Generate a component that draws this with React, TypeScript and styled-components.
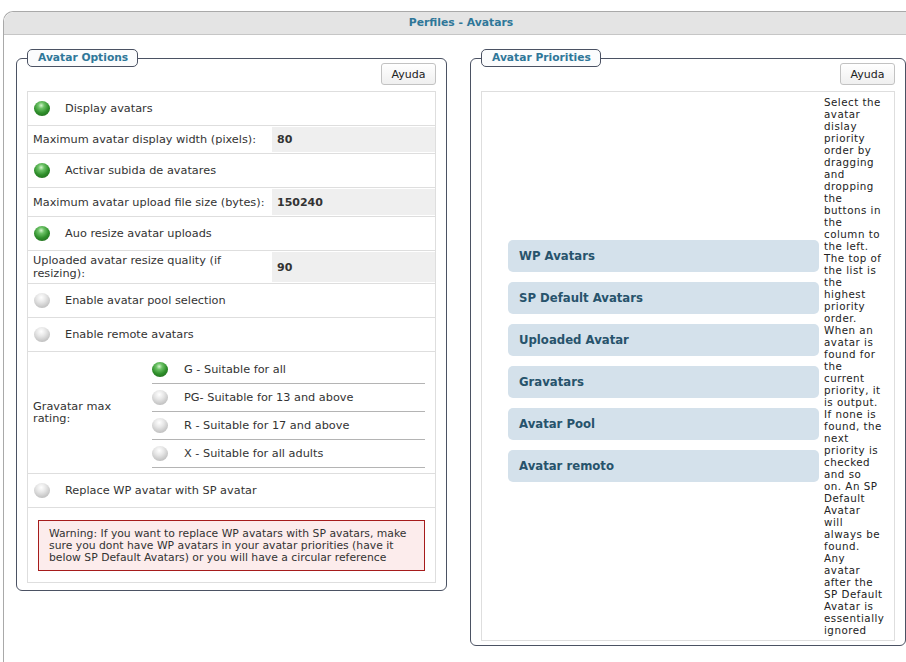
import { Fragment } from 'react'
import styled, { createGlobalStyle } from 'styled-components'

const GlobalStyle = createGlobalStyle`
  html, body {
    margin: 0;
    background: #fff;
    overflow: hidden;
  }
  body {
    font-family: 'DejaVu Sans', Verdana, sans-serif;
    font-size: 11.3px;
    color: #333;
  }
`

const Page = styled.div`
  padding: 11px 0 0 3px;
  width: 930px;
`

const Frame = styled.div`
  border: 1px solid #a9a9a9;
  border-right: none;
  border-bottom: none;
  border-radius: 10px 0 0 0;
  min-height: 660px;
`

const Header = styled.div`
  height: 22px;
  line-height: 22px;
  background: #e4e4e4;
  border-bottom: 1px solid #c6c6c6;
  border-radius: 10px 0 0 0;
  text-align: center;
  width: 914px;
  font-size: 10.8px;
  font-weight: bold;
  color: #2f7799;
`

const Columns = styled.div`
  display: grid;
  grid-template-columns: 431px 436px;
  column-gap: 23px;
  align-items: start;
  padding: 14px 0 0 12px;
`

const Box = styled.fieldset<{ $bottom: number }>`
  margin: 0;
  padding: 0 10px ${(p) => p.$bottom}px 10px;
  border: 1px solid #4b5263;
  border-radius: 6px;
  min-width: 0;
`

const Legend = styled.legend`
  padding: 0 9px 0 10px;
  height: 16px;
  line-height: 16px;
  border: 1px solid #4b5263;
  border-radius: 5px;
  background: #fbfcfd;
  font-size: 10.7px;
  font-weight: bold;
  color: #2f7799;
`

const Toolbar = styled.div`
  display: flex;
  justify-content: flex-end;
  margin: -4px 0 6px;
`

const HelpButton = styled.button`
  height: 22px;
  width: 55px;
  padding: 0;
  border: 1px solid #c2c2c2;
  border-radius: 3px;
  background: linear-gradient(#ffffff, #efefef);
  font-family: 'DejaVu Sans', Verdana, sans-serif;
  font-size: 11px;
  color: #222;
`

const Table = styled.div`
  border: 1px solid #dedede;
`

const Row = styled.div<{ $h: number }>`
  display: flex;
  align-items: center;
  min-height: ${(p) => p.$h}px;
  & + & {
    border-top: 1px solid #dedede;
  }
`

const Dot = styled.span<{ $on?: boolean }>`
  flex: none;
  display: inline-block;
  width: 16px;
  height: 15px;
  border-radius: 50%;
  background: ${(p) =>
    p.$on
      ? 'radial-gradient(circle at 45% 30%, #d6f5cf 0, #6cc266 22%, #2f8f2b 55%, #1b5e18 100%)'
      : 'radial-gradient(circle at 45% 30%, #ffffff 0, #e6e6e6 35%, #bdbdbd 80%, #a8a8a8 100%)'};
`

const ToggleRow = styled(Row)`
  padding-left: 6px;
  gap: 15px;
`

const FieldLabel = styled.div`
  width: 239px;
  padding-left: 5px;
  line-height: 13px;
`

const FieldValue = styled.div`
  align-self: stretch;
  flex: 1;
  display: flex;
  align-items: center;
  margin: 1px 0;
  padding-left: 5px;
  background: #efefef;
  font-weight: bold;
  font-size: 11px;
  color: #333;
`

const RatingLabel = styled.div`
  width: 90px;
  padding: 0 29px 0 5px;
  line-height: 12px;
`

const RatingList = styled.div`
  flex: 1;
  padding: 4px 10px 5px 0;
`

const RatingOption = styled.div`
  display: flex;
  align-items: center;
  gap: 16px;
  height: 27px;
  border-bottom: 1px solid #b4b4b4;
`

const WarningRow = styled(Row)`
  padding: 12px 10px 11px;
`

const Warning = styled.div`
  flex: 1;
  padding: 7px 10px 6px;
  border: 1px solid #a61c1c;
  background: #fcecec;
  line-height: 12px;
  font-size: 10.8px;
  color: #333;
`

const PriorityTable = styled(Table)`
  display: flex;
  min-height: 548px;
`

const PriorityList = styled.div`
  flex: 1;
  display: flex;
  flex-direction: column;
  justify-content: center;
  gap: 10px;
  padding: 0 5px 10px 26px;
`

const PriorityItem = styled.div`
  height: 32px;
  line-height: 32px;
  padding-left: 11px;
  border-radius: 5px;
  background: #d4e1eb;
  font-size: 11.7px;
  font-weight: bold;
  color: #27536c;
`

const Explanation = styled.p`
  margin: 0;
  width: 64px;
  padding: 4px 6px 4px 0;
  line-height: 12px;
  font-size: 10.3px;
  letter-spacing: 0.5px;
  color: #222;
  white-space: nowrap;
`

const toggles = {
  display: 'Display avatars',
  upload: 'Activar subida de avatares',
  resize: 'Auo resize avatar uploads',
  pool: 'Enable avatar pool selection',
  remote: 'Enable remote avatars',
  replace: 'Replace WP avatar with SP avatar',
}

const ratings = [
  { label: 'G - Suitable for all', on: true },
  { label: 'PG- Suitable for 13 and above', on: false },
  { label: 'R - Suitable for 17 and above', on: false },
  { label: 'X - Suitable for all adults', on: false },
]

const priorities = ['WP Avatars', 'SP Default Avatars', 'Uploaded Avatar', 'Gravatars', 'Avatar Pool', 'Avatar remoto']

// the help text wraps into a very narrow column, one or two words per line
const explanationLines = [
  'Select the', 'avatar', 'dislay', 'priority', 'order by', 'dragging', 'and', 'dropping', 'the',
  'buttons in', 'the', 'column to', 'the left.', 'The top of', 'the list is', 'the', 'highest',
  'priority', 'order.', 'When an', 'avatar is', 'found for', 'the', 'current', 'priority, it',
  'is output.', 'If none is', 'found, the', 'next', 'priority is', 'checked', 'and so', 'on. An SP',
  'Default', 'Avatar', 'will', 'always be', 'found.', 'Any', 'avatar', 'after the', 'SP Default',
  'Avatar is', 'essentially', 'ignored',
]

const Toggle = ({ label, on }: { label: string; on: boolean }) => (
  <ToggleRow $h={33}>
    <Dot $on={on} />
    <span>{label}</span>
  </ToggleRow>
)

const Field = ({ label, value, h = 27 }: { label: React.ReactNode; value: string; h?: number }) => (
  <Row $h={h}>
    <FieldLabel>{label}</FieldLabel>
    <FieldValue>{value}</FieldValue>
  </Row>
)

const App = () => {
  return (
    <>
      <GlobalStyle />
      <Page>
        <Frame>
          <Header>Perfiles - Avatars</Header>
          <Columns>
            <Box $bottom={7}>
              <Legend>Avatar Options</Legend>
              <Toolbar>
                <HelpButton>Ayuda</HelpButton>
              </Toolbar>
              <Table>
                <Toggle label={toggles.display} on />
                <Field label="Maximum avatar display width (pixels):" value="80" />
                <Toggle label={toggles.upload} on />
                <Field label="Maximum avatar upload file size (bytes):" value="150240" h={28} />
                <Toggle label={toggles.resize} on />
                <Field
                  label={
                    <>
                      Uploaded avatar resize quality (if
                      <br />
                      resizing):
                    </>
                  }
                  value="90"
                  h={32}
                />
                <Toggle label={toggles.pool} on={false} />
                <Toggle label={toggles.remote} on={false} />
                <Row $h={120}>
                  <RatingLabel>Gravatar max rating:</RatingLabel>
                  <RatingList>
                    {ratings.map((r) => (
                      <RatingOption key={r.label}>
                        <Dot $on={r.on} />
                        <span>{r.label}</span>
                      </RatingOption>
                    ))}
                  </RatingList>
                </Row>
                <Toggle label={toggles.replace} on={false} />
                <WarningRow $h={0}>
                  <Warning>
                    Warning: If you want to replace WP avatars with SP avatars, make sure you dont have WP avatars
                    in your avatar priorities (have it below SP Default Avatars) or you will have a circular
                    reference
                  </Warning>
                </WarningRow>
              </Table>
            </Box>
            <Box $bottom={4}>
              <Legend>Avatar Priorities</Legend>
              <Toolbar>
                <HelpButton>Ayuda</HelpButton>
              </Toolbar>
              <PriorityTable>
                <PriorityList>
                  {priorities.map((p) => (
                    <PriorityItem key={p}>{p}</PriorityItem>
                  ))}
                </PriorityList>
                <Explanation>
                  {explanationLines.map((line, i) => (
                    <Fragment key={i}>
                      {i > 0 && <br />}
                      {line}
                    </Fragment>
                  ))}
                </Explanation>
              </PriorityTable>
            </Box>
          </Columns>
        </Frame>
      </Page>
    </>
  )
}

export default App
